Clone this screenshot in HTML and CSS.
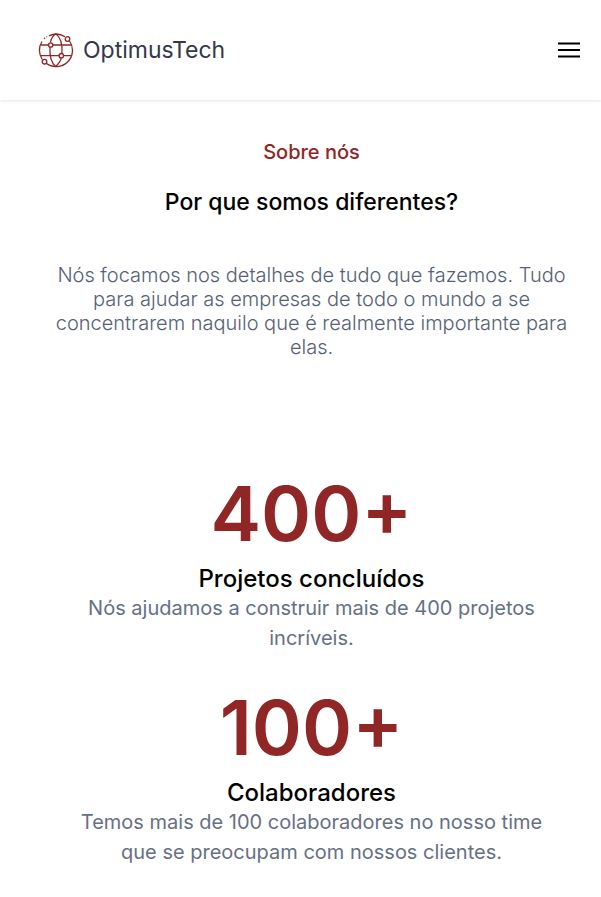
FILE: index.html
```html
<!DOCTYPE html>
<html lang="pt-BR">
<head>
<meta charset="utf-8">
<meta name="viewport" content="width=device-width, initial-scale=1">
<title>OptimusTech</title>
<link rel="stylesheet" href="styles.css">
</head>
<body>
<header class="header">
  <a class="brand" href="#">
    <svg class="brand-icon" viewBox="0 0 36 36" aria-hidden="true">
      <path d="M4 9.500A16.300 16.300 0 0 0 4.300 27.500M8.500 31.500A16.300 16.300 0 0 0 31.500 9M27 4.800A16.300 16.300 0 0 0 11 3.800M6 6.700L7 5.800M8.500 4.900L9 4.500"/>
      <path d="M17.700 1.700C14.500 4 12.800 8 12.400 10.500M12 15C11.500 23 13.500 31 17.700 34.500C21.500 31 23 28 23.400 25.700M23.900 21.300C24.500 13 22.500 5 17.700 1.700"/>
      <path d="M3 13H10.500M15 13H33.500M2.500 23.700H21M25.500 23.700H33"/>
      <circle cx="12.700" cy="13" r="2.200"/>
      <circle cx="23.300" cy="23.700" r="2.200"/>
      <circle cx="29.500" cy="7" r="2.300"/>
      <circle cx="6.500" cy="29.700" r="2.300"/>
    </svg>
    <span>OptimusTech</span>
  </a>
  <button class="menu" type="button" aria-label="Abrir menu">
    <svg viewBox="0 0 24 16" aria-hidden="true"><path d="M1 1.500H23M1 8H23M1 14.500H23"/></svg>
  </button>
</header>
<main class="about">
  <section class="intro">
    <p class="eyebrow">Sobre nós</p>
    <h1 class="title">Por que somos diferentes?</h1>
    <p class="lead">Nós focamos nos detalhes de tudo que fazemos. Tudo para ajudar as empresas de todo o mundo a se concentrarem naquilo que é realmente importante para elas.</p>
  </section>
  <section class="stats">
    <article class="stat">
      <p class="number">400+</p>
      <h2 class="label">Projetos concluídos</h2>
      <p class="text">Nós ajudamos a construir mais de 400 projetos incríveis.</p>
    </article>
    <article class="stat">
      <p class="number">100+</p>
      <h2 class="label">Colaboradores</h2>
      <p class="text">Temos mais de 100 colaboradores no nosso time que se preocupam com nossos clientes.</p>
    </article>
  </section>
</main>
</body>
</html>
```
FILE: styles.css
```css
* { box-sizing: border-box; margin: 0; padding: 0; }
body { font-family: Inter, sans-serif; color: #000; background: #fff; }
.header { display: flex; align-items: center; justify-content: space-between; padding: 32px 20px 32px 38px; box-shadow: 0 1px 3px rgba(0, 0, 0, 0.1); }
.brand { display: flex; align-items: center; gap: 9px; color: #343849; font-size: 23px; font-weight: 400; text-decoration: none; }
.brand-icon { width: 36px; height: 36px; fill: none; stroke: #912626; stroke-width: 1.3; }
.menu { display: flex; border: 0; background: none; }
.menu svg { width: 24px; height: 16px; stroke: #000; stroke-width: 2; }
.about { padding: 40px 28px 28px 50px; text-align: center; }
.eyebrow { color: #912626; font-size: 20px; font-weight: 500; line-height: 24px; }
.title { margin-top: 24px; font-size: 23px; font-weight: 500; line-height: 28px; }
.lead { margin-top: 47px; color: #566176; font-size: 20px; font-weight: 300; line-height: 24px; }
.stats { display: grid; gap: 32px; margin-top: 112px; padding: 0 24px; }
.number { color: #912626; font-size: 76px; font-weight: 600; line-height: 84px; }
.label { margin-top: 10px; font-size: 24px; font-weight: 500; line-height: 28px; }
.text { color: #667085; font-size: 20px; line-height: 30px; }
```
